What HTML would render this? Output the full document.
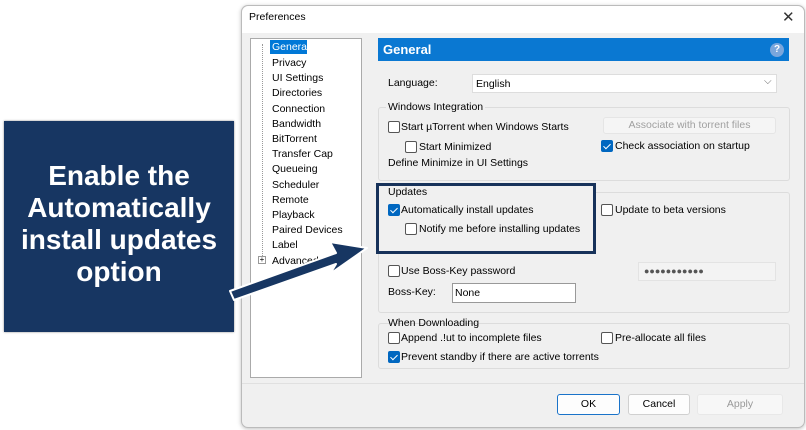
<!DOCTYPE html>
<html><head><meta charset="utf-8"><style>
*{box-sizing:border-box;margin:0;padding:0}
body{width:806px;height:430px;background:#fff;position:relative;overflow:hidden;font-family:"Liberation Sans",sans-serif;font-size:10.5px;color:#000}
.a{position:absolute;white-space:nowrap}
.cb{position:absolute;width:12px;height:12px;border:1px solid #555;border-radius:2px;background:#fff}
.cb.on{background:#0067c0;border-color:#0067c0}
.cb.on:after{content:"";position:absolute;left:3px;top:1px;width:3px;height:6px;border:solid #fff;border-width:0 1.5px 1.5px 0;transform:rotate(45deg)}
.grp{position:absolute;border:1px solid #dcdcdc;border-radius:3px}
.btn{position:absolute;border:1px solid #d0d0d0;border-radius:3px;background:#fdfdfd;text-align:center;line-height:18px}
</style></head><body>
<div class="a" style="left:241px;top:5px;width:564px;height:423px;background:#f0f0f0;border:1px solid #bbb;border-radius:7px;box-shadow:0 1px 4px rgba(0,0,0,.25)"></div>
<div class="a" style="left:242px;top:6px;width:562px;height:27px;background:#fff;border-radius:7px 7px 0 0"></div>
<div class="a" style="left:249px;top:11px">Preferences</div>
<div class="a" style="left:782px;top:8px;font-size:15px;color:#333">✕</div>
<!-- tree -->
<div class="a" style="left:250px;top:38px;width:112px;height:340px;background:#fff;border:1px solid #aaa"></div>
<div class="a" style="left:262px;top:44px;width:1px;height:214px;border-left:1px dotted #999"></div>
<div class="a" style="left:270px;top:40px;width:37px;height:14px;background:#0078d7"></div>
<div class="a" style="left:272px;top:41px;line-height:13px;color:#000">
<div style="color:#fff">General</div>
</div>
<div class="a" style="left:272px;top:56px;line-height:15.2px">
Privacy<br>UI Settings<br>Directories<br>Connection<br>Bandwidth<br>BitTorrent<br>Transfer Cap<br>Queueing<br>Scheduler<br>Remote<br>Playback<br>Paired Devices<br>Label<br>Advanced</div>
<div class="a" style="left:258px;top:256px;width:8px;height:8px;border:1px solid #999;background:#fff;font-size:8px;line-height:6px;text-align:center">+</div>
<!-- header -->
<div class="a" style="left:378px;top:38px;width:411px;height:23px;background:#0a78d2"></div>
<div class="a" style="left:383px;top:42px;color:#fff;font-weight:bold;font-size:13px">General</div>
<div class="a" style="left:770px;top:43px;width:14px;height:14px;border-radius:50%;background:#7aa6dc;color:#fff;font-size:10px;text-align:center;line-height:14px;font-weight:bold">?</div>
<div class="a" style="left:388px;top:77px">Language:</div>
<div class="a" style="left:472px;top:74px;width:305px;height:19px;background:#fff;border:1px solid #ddd;padding:3px 3px">English</div>
<div class="a" style="left:764px;top:76px;color:#666;font-size:10px">⌵</div>
<!-- windows integration -->
<div class="grp" style="left:378px;top:107px;width:412px;height:74px"></div>
<div class="a" style="left:386px;top:101px;background:#f0f0f0;padding:0 2px">Windows Integration</div>
<div class="cb" style="left:388px;top:121px"></div><div class="a" style="left:401px;top:121px">Start µTorrent when Windows Starts</div>
<div class="btn" style="left:603px;top:117px;width:173px;height:17px;color:#a0a0a0;background:#f5f5f5;border-color:#e5e5e5;line-height:15px">Associate with torrent files</div>
<div class="cb" style="left:405px;top:141px"></div><div class="a" style="left:419px;top:141px">Start Minimized</div>
<div class="cb on" style="left:601px;top:140px"></div><div class="a" style="left:615px;top:140px">Check association on startup</div>
<div class="a" style="left:388px;top:157px">Define Minimize in UI Settings</div>
<!-- updates -->
<div class="grp" style="left:378px;top:192px;width:412px;height:121px"></div>
<div class="a" style="left:376px;top:183px;width:220px;height:71px;border:3px solid #17325a;background:#f0f0f0"></div>
<div class="a" style="left:388px;top:186px">Updates</div>
<div class="cb on" style="left:388px;top:204px"></div><div class="a" style="left:401px;top:204px">Automatically install updates</div>
<div class="cb" style="left:405px;top:223px"></div><div class="a" style="left:419px;top:223px">Notify me before installing updates</div>
<div class="cb" style="left:601px;top:204px"></div><div class="a" style="left:615px;top:204px">Update to beta versions</div>
<div class="cb" style="left:388px;top:265px"></div><div class="a" style="left:401px;top:265px">Use Boss-Key password</div>
<div class="a" style="left:638px;top:262px;width:138px;height:19px;background:#f3f3f3;border:1px solid #e3e3e3;padding:3px 5px;font-size:9px;color:#555">●●●●●●●●●●●</div>
<div class="a" style="left:388px;top:286px">Boss-Key:</div>
<div class="a" style="left:452px;top:283px;width:124px;height:20px;background:#fff;border:1px solid #999;padding:3px 2px">None</div>
<!-- downloading -->
<div class="grp" style="left:378px;top:323px;width:412px;height:46px"></div>
<div class="a" style="left:388px;top:317px">When Downloading</div>
<div class="cb" style="left:388px;top:332px"></div><div class="a" style="left:401px;top:332px">Append .!ut to incomplete files</div>
<div class="cb" style="left:601px;top:332px"></div><div class="a" style="left:615px;top:332px">Pre-allocate all files</div>
<div class="cb on" style="left:388px;top:351px"></div><div class="a" style="left:401px;top:351px">Prevent standby if there are active torrents</div>
<div class="a" style="left:242px;top:383px;width:562px;height:1px;background:#e0e0e0"></div>
<div class="btn" style="left:557px;top:394px;width:63px;height:21px;border:1px solid #1a73c9">OK</div>
<div class="btn" style="left:628px;top:394px;width:62px;height:21px">Cancel</div>
<div class="btn" style="left:697px;top:394px;width:86px;height:21px;color:#999;background:#f7f7f7;border-color:#e8e8e8">Apply</div>
<!-- callout -->
<div class="a" style="left:4px;top:121px;width:230px;height:211px;background:#173662;box-shadow:0 0 2px #888"></div>
<div class="a" style="left:4px;top:160px;width:230px;text-align:center;color:#fff;font-weight:bold;font-size:28px;line-height:32px;white-space:normal">Enable the Automatically install updates option</div>
<svg class="a" style="left:0;top:0" width="806" height="430"><polygon points="234,300 336,264 330,274 367,248 330,242 336,253 230,291" fill="#173662" stroke="#fff" stroke-width="2" stroke-linejoin="round"/></svg>
</body></html>
